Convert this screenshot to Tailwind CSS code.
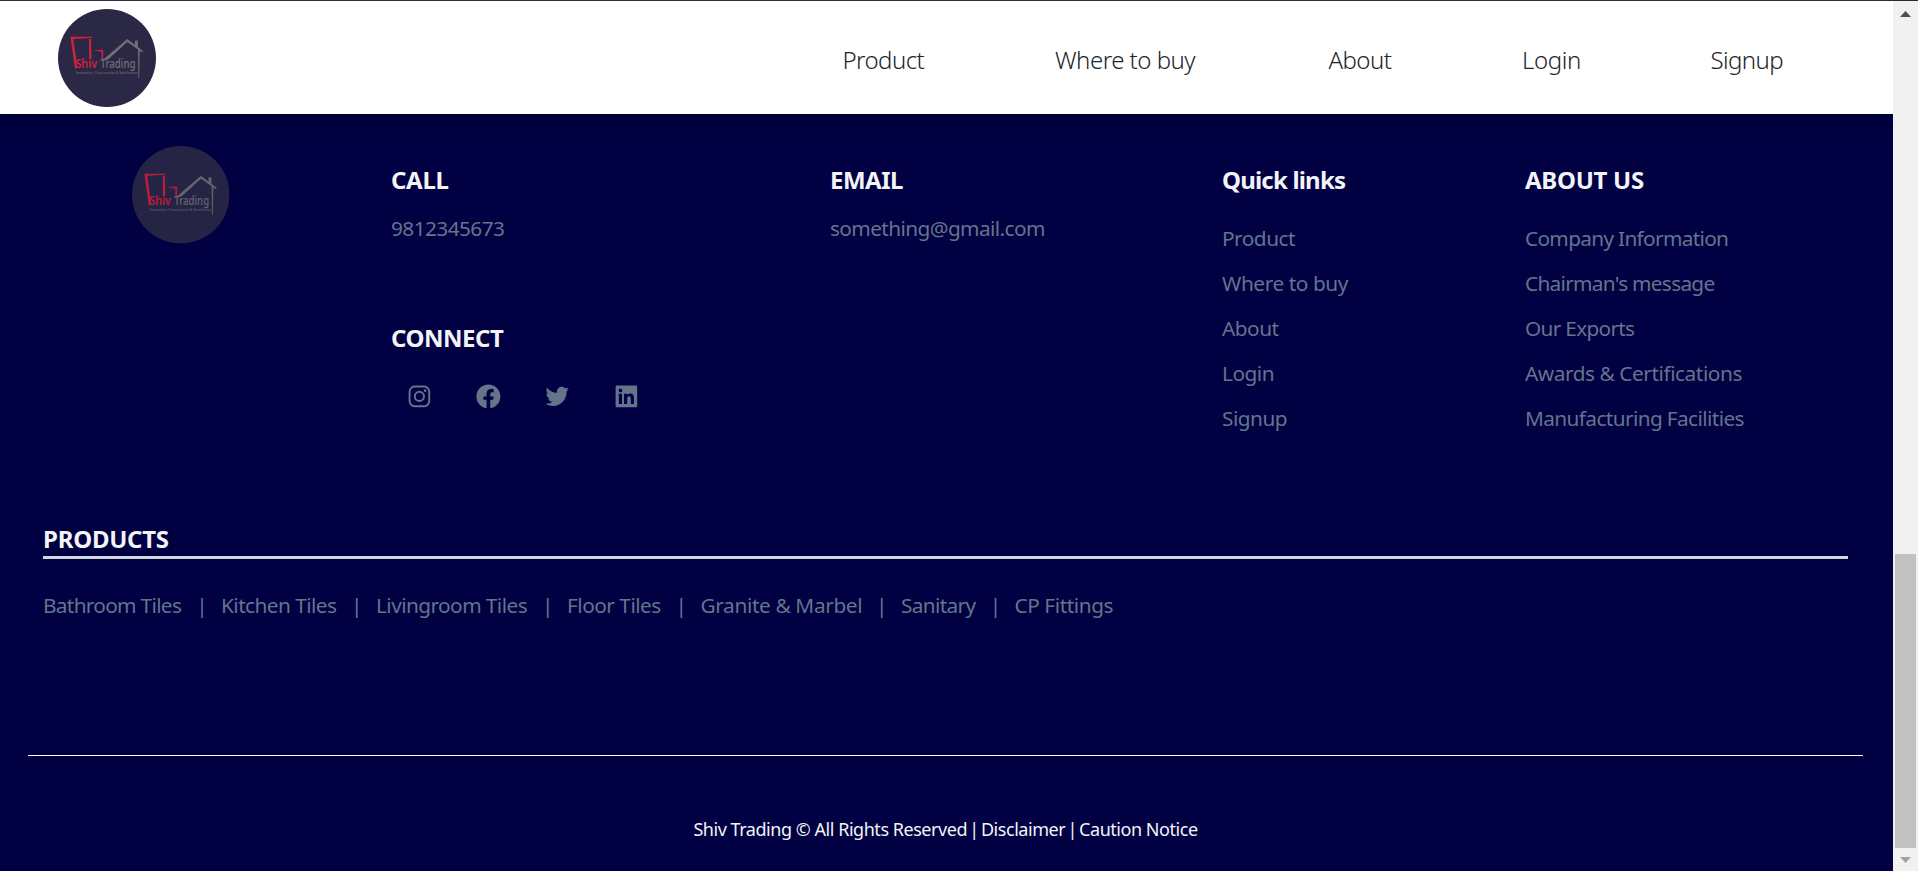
<!DOCTYPE html>
<html lang="en">
<head>
<meta charset="utf-8">
<title>Shiv Trading</title>
<script src="https://cdn.jsdelivr.net/npm/@tailwindcss/browser@4"></script>
</head>
<body class="flex h-[871px] w-[1918px] flex-col overflow-hidden border-t border-[#2b2a40] bg-[#000042] font-['Noto_Sans','Open_Sans',sans-serif]">
<svg class="hidden">
  <symbol id="logo" viewBox="0 0 98 98">
    <circle cx="49" cy="49" r="49" fill="#2b2845"/>
    <g fill="#d0213a">
      <path d="M12.5 27.8 34 27.8 34 29 15.3 30 19.3 58 17 60z"/>
      <path d="M31 30h2l.5 20h-2.3z"/>
      <path d="M35 41.3 45.2 40.8V50.500h-1.600V42.800z"/>
    </g>
    <g fill="#717076">
      <path d="M42 52 46.500 49.500 69.300 30 85.300 42.200 84 43.300 69.300 33 50 50.500z"/>
      <path d="M77 31.500h2.800v8l-2.800-2z"/>
      <path d="M80 41h1.700l-.5 28h-.7z"/>
    </g>
    <g font-family="Noto Sans, sans-serif" font-weight="500" font-size="12.500">
      <text x="17.500" y="59.200" textLength="21.500" lengthAdjust="spacingAndGlyphs" fill="#d0213a" font-weight="600">Shiv</text>
      <text x="42.500" y="59.200" textLength="35" lengthAdjust="spacingAndGlyphs" fill="#717076">Trading</text>
      <text x="17.700" y="65.300" font-size="3.800" textLength="62" lengthAdjust="spacingAndGlyphs" fill="#6c6b74">Innovation, Construction &amp; Satisfaction</text>
    </g>
  </symbol>
</svg>

<div class="flex min-h-0 flex-1">
  <div class="flex w-[1893px] flex-col overflow-hidden">
    <header class="relative flex h-[113px] shrink-0 bg-white pl-[58px] text-[24px] leading-8 font-[350] text-[#212529] shadow-[0_2px_12px_rgba(0,0,0,0.35)]">
      <svg class="mt-2 size-[98px]"><use href="#logo"/></svg>
      <nav class="ml-[686.5px] flex gap-[129.5px] pt-[43px] whitespace-nowrap">
        <a class="w-[83px] tracking-[-0.55px]">Product</a>
        <a class="w-[144px] tracking-[-0.5px]">Where to buy</a>
        <a class="w-[64px] tracking-[-0.55px]">About</a>
        <a class="w-[59px] tracking-[-0.4px]">Login</a>
        <a class="w-[75px] tracking-[-0.6px]">Signup</a>
      </nav>
    </header>

    <footer class="flex flex-1 flex-col text-[20.8px] leading-[45px] text-[#64748b]">
      <div class="flex h-[402px] whitespace-nowrap">
        <div class="w-[391px] pt-8 pl-[132px]">
          <svg class="size-[97.5px] opacity-90"><use href="#logo"/></svg>
        </div>
        <div class="w-[439px] pt-[50px]">
          <h2 class="text-[24px] leading-8 font-bold tracking-[-0.3px] text-gray-100">CALL</h2>
          <p class="pt-4 leading-8 tracking-[-0.56px]">9812345673</p>
          <h2 class="mt-[78px] text-[24px] leading-8 font-bold tracking-[-0.46px] text-gray-100">CONNECT</h2>
          <div class="mt-[28px] flex gap-[40.2px] pl-[13.600px]">
            <svg class="size-[28.8px]" viewBox="0 0 24 24" fill="none" stroke="currentColor" stroke-width="1.620"><rect x="3.810" y="3.810" width="16.380" height="16.380" rx="4.300"/><circle cx="12" cy="12" r="3.810"/><circle cx="16.800" cy="7.200" r="1.080" fill="currentColor" stroke="none"/></svg>
            <svg class="size-[28.8px]" viewBox="0 0 24 24" fill="currentColor"><path d="M12.001 2.002c-5.522 0-9.999 4.477-9.999 9.999 0 4.990 3.656 9.126 8.437 9.879v-6.988h-2.540v-2.891h2.540V9.798c0-2.508 1.493-3.891 3.776-3.891 1.094 0 2.240.195 2.240.195v2.459h-1.264c-1.240 0-1.628.772-1.628 1.563v1.875h2.771l-.443 2.891h-2.328v6.988C18.344 21.129 22 16.992 22 12.001c0-5.522-4.477-9.999-9.999-9.999z"/></svg>
            <svg class="size-[28.8px]" viewBox="0 0 24 24" fill="currentColor"><path d="M19.633 7.997c.013.175.013.349.013.523 0 5.325-4.053 11.461-11.460 11.461-2.282 0-4.402-.661-6.186-1.809.324.037.636.050.973.050a8.070 8.070 0 0 0 5.001-1.721 4.036 4.036 0 0 1-3.767-2.793c.249.037.499.062.761.062.361 0 .724-.050 1.061-.137a4.027 4.027 0 0 1-3.230-3.953v-.050c.537.299 1.160.486 1.820.511a4.022 4.022 0 0 1-1.796-3.354c0-.748.199-1.434.548-2.032a11.457 11.457 0 0 0 8.306 4.215c-.062-.300-.100-.611-.100-.923a4.026 4.026 0 0 1 4.028-4.028c1.160 0 2.207.486 2.943 1.272a7.957 7.957 0 0 0 2.556-.973 4.020 4.020 0 0 1-1.771 2.220 8.073 8.073 0 0 0 2.319-.624 8.645 8.645 0 0 1-2.019 2.083z"/></svg>
            <svg class="size-[28.8px]" viewBox="0 0 24 24" fill="currentColor"><path d="M20 3H4a1 1 0 0 0-1 1v16a1 1 0 0 0 1 1h16a1 1 0 0 0 1-1V4a1 1 0 0 0-1-1zM8.339 18.337H5.667v-8.590h2.672v8.590zM7.003 8.574a1.548 1.548 0 1 1 0-3.096 1.548 1.548 0 0 1 0 3.096zm11.335 9.763h-2.669V14.160c0-.996-.018-2.277-1.388-2.277-1.390 0-1.601 1.086-1.601 2.207v4.248h-2.667v-8.590h2.560v1.174h.037c.355-.675 1.227-1.387 2.524-1.387 2.704 0 3.203 1.778 3.203 4.092v4.710z"/></svg>
          </div>
        </div>
        <div class="w-[392px] pt-[50px]">
          <h2 class="text-[24px] leading-8 font-bold tracking-[-0.5px] text-gray-100">EMAIL</h2>
          <p class="pt-4 leading-8 tracking-[-0.59px]">something@gmail.com</p>
        </div>
        <div class="w-[303px] pt-[50px]">
          <h2 class="pb-5 text-[24px] leading-8 font-bold tracking-[-0.81px] text-gray-100">Quick links</h2>
          <ul class="tracking-[-0.5px]">
            <li>Product</li><li class="tracking-[-0.42px]">Where to buy</li><li>About</li><li>Login</li><li>Signup</li>
          </ul>
        </div>
        <div class="pt-[50px]">
          <h2 class="pb-5 text-[24px] leading-8 font-bold tracking-[-0.28px] text-gray-100">ABOUT US</h2>
          <ul>
            <li class="tracking-[-0.68px]">Company Information</li>
            <li class="tracking-[-0.7px]">Chairman's message</li>
            <li class="tracking-[-0.7px]">Our Exports</li>
            <li class="tracking-[-0.44px]">Awards &amp; Certifications</li>
            <li class="tracking-[-0.61px]">Manufacturing Facilities</li>
          </ul>
        </div>
      </div>

      <section class="mr-[45px] ml-[43px] h-[239px] whitespace-nowrap">
        <h2 class="h-[43px] border-b-[3px] border-gray-300 pt-[7px] text-[24px] leading-8 font-bold tracking-[-0.25px] text-gray-100">PRODUCTS</h2>
        <ul class="flex pt-[24px]">
          <li class="flex w-[178px] justify-between pr-[14px] tracking-[-0.68px]">Bathroom Tiles<span>|</span></li>
          <li class="flex w-[155px] justify-between pr-[14px] tracking-[-0.55px]">Kitchen Tiles<span>|</span></li>
          <li class="flex w-[191px] justify-between pr-[14px] tracking-[-0.56px]">Livingroom Tiles<span>|</span></li>
          <li class="flex w-[133.500px] justify-between pr-[14px] tracking-[-0.5px]">Floor Tiles<span>|</span></li>
          <li class="flex w-[200.500px] justify-between pr-[14px] tracking-[-0.36px]">Granite &amp; Marbel<span>|</span></li>
          <li class="flex w-[113.500px] justify-between pr-[14px] tracking-[-0.65px]">Sanitary<span>|</span></li>
          <li class="tracking-[-0.42px]">CP Fittings</li>
        </ul>
      </section>

      <div class="mr-[30px] ml-[28px] border-t border-white pt-[57px] text-center text-[18px] leading-8 tracking-[-0.46px] text-gray-100">Shiv Trading © All Rights Reserved <span class="-mx-[2px]">|</span> Disclaimer <span class="-mx-[2px]">|</span> Caution Notice</div>
    </footer>
  </div>

  <div class="flex w-[25px] flex-col items-center bg-[#f1f1f1]">
    <svg class="mt-[10px] h-[6px] w-[11px]" viewBox="0 0 11 6"><path d="M5.500 0 11 6H0z" fill="#505050"/></svg>
    <div class="mt-[537px] h-[294px] w-[21px] bg-[#c1c1c1]"></div>
    <svg class="mt-[9px] h-[6px] w-[11px]" viewBox="0 0 11 6"><path d="M0 0h11L5.500 6z" fill="#a3a3a3"/></svg>
  </div>
</div>
</body>
</html>
